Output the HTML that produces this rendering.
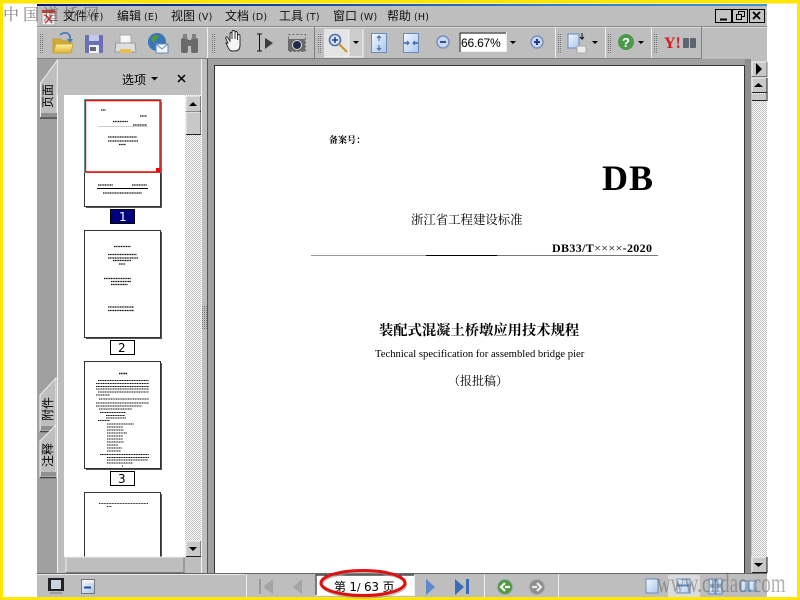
<!DOCTYPE html>
<html><head><meta charset="utf-8">
<style>
html,body{margin:0;padding:0;width:800px;height:600px;overflow:hidden;background:#fff}
.t{position:absolute;white-space:nowrap;line-height:1;color:#000}
.m{font-family:"WenQuanYi Zen Hei","Noto Sans CJK SC",sans-serif;font-size:12px;top:10px;color:#111}
.m small{font:9.500px "DejaVu Sans",sans-serif;margin-left:3px;letter-spacing:.2px}
.s{font-family:"Liberation Serif","Noto Serif CJK SC",serif}
svg{position:absolute;left:0;top:0}
.v{font-family:"WenQuanYi Zen Hei","Noto Sans CJK SC",sans-serif;font-size:12px;width:24px;height:12px;transform:rotate(-90deg);transform-origin:50% 50%}
</style></head><body>
<svg width="800" height="600" viewBox="0 0 800 600">
<defs>
<pattern id="d" width="2" height="2" patternUnits="userSpaceOnUse"><rect width="2" height="2" fill="#fff"/><rect width="1" height="1" fill="#bebebe"/><rect x="1" y="1" width="1" height="1" fill="#bebebe"/></pattern>
<pattern id="g" width="2" height="2" patternUnits="userSpaceOnUse"><rect width="1" height="1" fill="#777"/></pattern>
<linearGradient id="fo" x1="0" y1="0" x2="0" y2="1"><stop offset="0" stop-color="#fff3a8"/><stop offset="1" stop-color="#e0b030"/></linearGradient>
<linearGradient id="bl" x1="0" y1="0" x2="1" y2="1"><stop offset="0" stop-color="#f4f8fe"/><stop offset="1" stop-color="#a8c6ea"/></linearGradient>
<linearGradient id="tb" x1="0" y1="0" x2="1" y2="0"><stop offset="0" stop-color="#001a80"/><stop offset=".25" stop-color="#0a3c9a"/><stop offset=".7" stop-color="#2f7cd0"/><stop offset="1" stop-color="#3d92e0"/></linearGradient>
</defs>
<!-- frame -->
<rect x="37" y="4" width="730" height="593" fill="#bebebe"/>
<rect x="37" y="4" width="730" height="2" fill="url(#tb)"/>
<rect width="800" height="3.500" fill="#ffe600"/>
<rect width="3" height="600" fill="#ffe600"/>
<rect x="797" width="3" height="600" fill="#ffe600"/>
<rect y="597" width="800" height="3" fill="#ffe600"/>
<!-- toolbar lines -->
<rect x="37" y="26" width="730" height="1" fill="#8a8a8a"/>
<rect x="37" y="27" width="730" height="1" fill="#dcdcdc"/>
<rect x="37" y="58" width="665" height="1" fill="#808080"/>
<g fill="#eee"><rect x="207" y="27" width="1" height="31"/><rect x="555" y="27" width="1" height="31"/><rect x="605" y="27" width="1" height="31"/><rect x="651" y="27" width="1" height="31"/></g>
<g fill="#808080"><rect x="314" y="27" width="1" height="31"/><rect x="701" y="27" width="1" height="31"/></g>
<g fill="url(#g)"><rect x="40" y="33" width="4" height="20"/><rect x="212" y="33" width="4" height="20"/><rect x="318" y="33" width="4" height="20"/><rect x="558" y="33" width="4" height="20"/><rect x="608" y="33" width="4" height="20"/><rect x="654" y="33" width="4" height="20"/></g>
<!-- window buttons -->
<g fill="#c4c4c4" stroke="#000"><rect x="715.500" y="9.500" width="16" height="13"/><rect x="732.500" y="9.500" width="15" height="13"/><rect x="749.500" y="9.500" width="15" height="13"/></g>
<g fill="none" stroke="#000"><path d="M720 19.500h7" stroke-width="2"/><rect x="736.500" y="14.500" width="5" height="5"/><path d="M738.500 14v-2.500h6v5h-3" /><path d="M753 12l7 7M760 12l-7 7" stroke-width="1.800"/></g>
<!-- pdf icon -->
<path d="M42 10h13v15H42z" fill="#f4ecec" stroke="#aaa"/><path d="M42 10h13v3H42z" fill="#c84030"/><path d="M44 15c4 1 5 4 8 8M52 15c-2 3-4 6-7 8" stroke="#d83030" stroke-width="1.500" fill="none"/>
<!-- toolbar icons -->
<path d="M53 39h7l2 2h9v12H53z" fill="#d8a930" stroke="#c09a38"/><path d="M53 53l3-9h17l-2 9z" fill="url(#fo)" stroke="#c8a438"/><path d="M60 35c3-3 8-3 10 1v3" stroke="#4a7cb8" stroke-width="1.800" fill="none"/><path d="M67 39h6l-3 4z" fill="#4a7cb8"/>
<rect x="85" y="35" width="18" height="18" rx="1" fill="#6a70b4"/><rect x="89" y="35" width="10" height="6" fill="#c4c8e8"/><rect x="89" y="45" width="10" height="8" fill="#eef0f6"/><rect x="90" y="47" width="6" height="4" fill="#667"/>
<rect x="120" y="35" width="11" height="8" fill="#f4f6f8" stroke="#aaa"/><path d="M116 43h19l1 9h-21z" fill="#dcdee2" stroke="#999"/><rect x="120" y="49" width="11" height="4" fill="#e8c050"/>
<circle cx="157" cy="42" r="9" fill="#3a76b8"/><path d="M151 38c3-3 7-4 8-2-1 3-4 3-4 6-2 1-4-1-4-4z" fill="#4f9a40"/><rect x="156" y="44" width="12" height="9" fill="#f0f6fd" stroke="#6a8ab8"/><path d="M156 44l6 5 6-5" fill="none" stroke="#6a8ab8"/>
<g fill="#6a6a6a"><rect x="181" y="38" width="7" height="15" rx="2"/><rect x="191" y="38" width="7" height="15" rx="2"/><rect x="183" y="34" width="4" height="5" fill="#808080"/><rect x="192" y="34" width="4" height="5" fill="#808080"/><rect x="187" y="40" width="5" height="6"/></g>
<path d="M228 43l-2-4c-1-2 1-3 2-1l2 3v-7c0-2 2-2 2 0v5-7c0-2 3-2 3 0v7-6c0-2 2-2 2.500 0v7-4c0-2 2.500-2 2.500 0v9c0 4-2 6-5 6h-3c-3 0-4-4-6-8z" fill="#f6f6f6" stroke="#222" stroke-width=".9"/>
<path d="M257 34h5M259.500 34v17M257 51h5" stroke="#111" fill="none"/><path d="M265 38l8 5-8 6z" fill="#3c3c3c"/>
<rect x="288.500" y="34.500" width="17" height="17" fill="none" stroke="#666" stroke-dasharray="2 2"/><rect x="288" y="39" width="17" height="12" fill="#6a6a6a"/><circle cx="297" cy="45" r="4.500" fill="#1c2c4a" stroke="#ddd"/>
<rect x="324" y="29" width="25" height="28" fill="#e4e4e4"/><rect x="350" y="29" width="13" height="28" fill="#ccc"/><path d="M349 29v28M324 57h39V29" stroke="#f8f8f8" fill="none"/>
<circle cx="335" cy="40" r="5.500" fill="#dfe8f8" stroke="#4c6cb0" stroke-width="1.600"/><path d="M335 37v6M332 40h6" stroke="#1c3c90" stroke-width="1.500"/><path d="M339 44l8 8" stroke="#c49a30" stroke-width="2.200"/>
<path d="M353 41h6l-3 3zM510 41h6l-3 3zM592 41h6l-3 3zM638 41h6l-3 3z" fill="#000"/>
<rect x="371.500" y="33.500" width="15" height="19" fill="url(#bl)" stroke="#6a8ab8"/><path d="M379 36v5M379 45v5" stroke="#3a62a8"/><path d="M377 38l2-2 2 2M377 48l2 2 2-2" fill="none" stroke="#3a62a8"/>
<rect x="403.500" y="33.500" width="15" height="19" fill="url(#bl)" stroke="#6a8ab8"/><path d="M404 43h4M414 43h4" stroke="#3a62a8" stroke-width="1.400"/><path d="M407 41l2 2-2 2M415 41l-2 2 2 2" fill="none" stroke="#3a62a8"/>
<circle cx="443" cy="42" r="6" fill="#c8d8f0" stroke="#7a92bc" stroke-width="1.500"/><rect x="440" y="41" width="6" height="2" fill="#33528c"/>
<circle cx="537" cy="42" r="6" fill="#c8d8f0" stroke="#7a92bc" stroke-width="1.500"/><path d="M537 39v6M534 42h6" stroke="#1c3c90" stroke-width="2"/>
<rect x="459.500" y="32.500" width="47" height="19" fill="#fff" stroke="#eee"/><path d="M460 52v-19h46" stroke="#000" fill="none"/>
<path d="M568 34h11v14h-11z" fill="url(#bl)" stroke="#6a8ab8"/><path d="M577 46h9v7l-3 0h-6z" fill="#eee" stroke="#aaa"/><path d="M582 33v6l-2-2M582 39l2-2" stroke="#111" fill="none"/>
<circle cx="626" cy="42" r="8" fill="#4a9a4a"/><text x="622" y="47" font-family="Liberation Sans" font-weight="bold" font-size="13" fill="#fff">?</text>
<text x="664" y="48" font-family="Liberation Serif" font-weight="bold" font-size="16" fill="#d81818">Y!</text>
<g fill="#5c6470"><rect x="683" y="38" width="6" height="10" rx="1"/><rect x="690" y="38" width="6" height="10" rx="1"/></g>
<!-- left panel -->
<rect x="37" y="59" width="20" height="515" fill="#a0a0a0"/>
<rect x="57" y="59" width="144" height="36" fill="#bebebe"/>
<path d="M57.500 60L40.500 83V118H57V95Z" fill="#bebebe" stroke="#f0f0f0"/>
<path d="M40 118h17" stroke="#444" stroke-width="1.500"/><rect x="41" y="113" width="16" height="4" fill="#909090"/>
<rect x="57" y="95" width="1" height="479" fill="#f4f4f4"/>
<rect x="58" y="95" width="6" height="479" fill="#bebebe"/>
<rect x="64" y="95" width="121" height="463" fill="#fff"/>
<rect x="185" y="95" width="16" height="463" fill="url(#d)"/>
<rect x="186" y="96" width="14" height="15" fill="#c8c8c8"/><path d="M186 111V96h14" stroke="#f4f4f4" fill="none"/><path d="M186 111.500h15V96" stroke="#222" fill="none"/><path d="M189 106h8l-4-4z" fill="#000"/>
<rect x="186" y="112" width="14" height="22" fill="#c8c8c8"/><path d="M186 134V112h14" stroke="#f4f4f4" fill="none"/><path d="M186 134.500h15V112" stroke="#222" fill="none"/>
<rect x="186" y="541" width="14" height="15" fill="#c8c8c8"/><path d="M186 556V541h14" stroke="#f4f4f4" fill="none"/><path d="M186 556.500h15V541" stroke="#222" fill="none"/><path d="M189 547h8l-4 4z" fill="#000"/>
<rect x="201" y="59" width="1" height="515" fill="#f4f4f4"/><rect x="202" y="59" width="5" height="515" fill="#bebebe"/><rect x="207" y="59" width="1" height="515" fill="#555"/>
<rect x="202" y="306" width="5" height="24" fill="url(#g)"/>
<!-- side tabs -->
<path d="M56 378L40 395V431H56Z" fill="#bebebe" stroke="#eee"/><path d="M40 431.500h16" stroke="#444" stroke-width="1.500"/><rect x="41" y="426" width="15" height="4" fill="#909090"/>
<path d="M56 425L40 441V477H56Z" fill="#bebebe" stroke="#eee"/><path d="M40 477.500h16" stroke="#444" stroke-width="1.500"/><rect x="41" y="472" width="15" height="4" fill="#909090"/>
<!-- close x -->
<path d="M178 75l7 7M185 75l-7 7" stroke="#000" stroke-width="1.500"/><path d="M151 77h7l-3.500 3.500z" fill="#000"/>
<!-- thumbs -->
<g>
<rect x="86" y="102" width="76" height="106" fill="#555"/><rect x="84.500" y="100.500" width="76" height="106" fill="#fff" stroke="#333"/>
<rect x="84.500" y="99.500" width="76.500" height="73" fill="none" stroke="#3bb5b5"/><path d="M85.500 172V100.500H160V172H85.500" fill="none" stroke="#f00" stroke-width="1.400"/><rect x="156" y="168" width="4" height="4" fill="#f00"/>
<path d="M98 126.500h50" stroke="#ccc"/><path d="M97 188.500h51" stroke="#000"/>
<g stroke="#111" fill="none" stroke-dasharray="1.200 .5" stroke-width="1.300"><path d="M101 110h5M140 116h7M113 121.500h15M133 125h14"/><path d="M108 137h29M108 141h30M119 144.500h7M98 185h15M132 185h15M103 193h39"/></g>
</g>
<rect x="110.500" y="209.500" width="24" height="14" fill="#000080" stroke="#000"/>
<g>
<rect x="86" y="232" width="76" height="107" fill="#555"/><rect x="84.500" y="230.500" width="76" height="107" fill="#fff" stroke="#333"/>
<g stroke="#111" fill="none" stroke-dasharray="1.200 .5" stroke-width="1.200"><path d="M114 246.500h17M108 254.500h29M108 258h30M113 260.500h18M119 264h6M104 278.500h27M111 281.500h20M111 284.500h17M108 307h26M108 310.500h26"/></g>
</g>
<rect x="110.500" y="340.500" width="24" height="14" fill="#fff" stroke="#000"/>
<g>
<rect x="86" y="363" width="76" height="107" fill="#555"/><rect x="84.500" y="361.500" width="76" height="107" fill="#fff" stroke="#333"/>
<g stroke="#111" fill="none" stroke-dasharray="1.200 .5" stroke-width="1.100"><path d="M119 373.500h8" stroke-width="1.500"/><path d="M98 380.500h51M96 383.500h53M96 386.500h53M96 389h53M98 392h51M96 395h14M99 399h50M96 403h53M96 406h46M99 409h33M100 412.500h26M106 415.500h19M106 418h20M98 420.500h12M107 424h27M107 427h16M107 430h17M107 433h20M107 436h16M107 439h16M107 442h17M107 445h11M107 448h15M107 451h14M100 454.500h49M107 457.500h42M107 460h41M107 463h26M122 466h1"/></g>
</g>
<rect x="110.500" y="471.500" width="24" height="14" fill="#fff" stroke="#000"/>
<rect x="86" y="494" width="76" height="64" fill="#555"/><rect x="84.500" y="492.500" width="76" height="70" fill="#fff" stroke="#333"/>
<path d="M99 503.500h49M107 506.500h5" stroke="#222" stroke-dasharray="1 .6"/>
<rect x="64" y="557" width="137" height="16" fill="#bebebe"/><path d="M66 572.500h118v-15" stroke="#777" fill="none"/><path d="M66 572v-15h118" stroke="#eee" fill="none"/>
<!-- main -->
<rect x="208" y="59" width="6" height="515" fill="#a0a0a0"/>
<rect x="214" y="59" width="537" height="6" fill="#a0a0a0"/>
<rect x="745" y="59" width="6" height="515" fill="#8e8e8e"/>
<rect x="215" y="66" width="530" height="508" fill="#fff"/>
<path d="M214.500 574V65.500H744.500V574" fill="none" stroke="#333"/>
<path d="M311 255.500H426" stroke="#999"/><path d="M426 255.500H497" stroke="#000"/><path d="M497 255.500H658" stroke="#777"/>
<!-- right scrollbar -->
<rect x="751" y="59" width="16" height="515" fill="#bebebe"/>
<rect x="752" y="93" width="15" height="464" fill="url(#d)"/>
<rect x="752" y="62" width="14" height="14" fill="#c8c8c8"/><path d="M752 76V62h14" stroke="#f4f4f4" fill="none"/><path d="M752 76.500h15V62" stroke="#777" fill="none"/><path d="M756 63l6 6-6 6z" fill="#000"/>
<rect x="752" y="78" width="14" height="14" fill="#c8c8c8"/><path d="M752 92V78h14" stroke="#f4f4f4" fill="none"/><path d="M752 92.500h15V78" stroke="#222" fill="none"/><path d="M754 87h9l-4.500-4z" fill="#000"/>
<rect x="752" y="94" width="14" height="6" fill="#c8c8c8"/><path d="M752 100.500h15V93" stroke="#222" fill="none"/>
<rect x="752" y="557" width="14" height="15" fill="#c8c8c8"/><path d="M752 572V557h14" stroke="#f4f4f4" fill="none"/><path d="M752 572.500h15V557" stroke="#222" fill="none"/><path d="M754 563h9l-4.500 4z" fill="#000"/>
<!-- status -->
<rect x="37" y="573" width="730" height="1" fill="#666"/>
<rect x="37" y="574" width="730" height="23" fill="#bebebe"/><rect x="37" y="574" width="208" height="1" fill="#e8e8e8"/>
<rect x="246" y="574" width="1" height="23" fill="#eee"/><rect x="484" y="574" width="1" height="23" fill="#eee"/><rect x="558" y="574" width="1" height="23" fill="#eee"/>
<rect x="48" y="578" width="16" height="13" fill="#222"/><rect x="51" y="580" width="10" height="9" fill="#c8d4e0"/><path d="M50 593h12" stroke="#777"/>
<rect x="81.500" y="579.500" width="13" height="14" fill="url(#bl)" stroke="#777"/><rect x="82" y="580" width="12" height="3" fill="#eee"/><rect x="84" y="586.500" width="7" height="2" fill="#2a4a90"/>
<rect x="259" y="579" width="2" height="15" fill="#999"/><path d="M263 587l10-8v15z" fill="#a4a4a4"/><path d="M293 587l9-8v15z" fill="#a4a4a4"/>
<rect x="315.500" y="575.500" width="99" height="20" fill="#fff" stroke="#eee"/><path d="M316 595v-20h98" stroke="#000" fill="none"/>
<path d="M426 579l9 8-9 8z" fill="#5a8acc"/><path d="M455 579l9 8-9 8z" fill="#3a6cb8"/><rect x="466" y="579" width="3" height="15" fill="#3a6cb8"/>
<circle cx="505" cy="587" r="7.500" fill="#4f9a3a" stroke="#9ab"/><path d="M510 587h-5M505 583l-4 4 4 4" stroke="#fff" stroke-width="2.200" fill="none"/>
<circle cx="537" cy="587" r="7.500" fill="#8e8e8e" stroke="#aaa"/><path d="M532 587h5M537 583l4 4-4 4" stroke="#eee" stroke-width="2.200" fill="none"/>
<rect x="646" y="579" width="12" height="14" fill="url(#bl)" stroke="#6a8ab8"/>
<rect x="668" y="575" width="32" height="22" fill="#dcdcdc"/><rect x="677" y="579" width="13" height="6" fill="url(#bl)" stroke="#6a8ab8"/><rect x="677" y="586" width="13" height="7" fill="url(#bl)" stroke="#6a8ab8"/>
<rect x="709" y="579" width="6" height="6" fill="url(#bl)" stroke="#6a8ab8"/><rect x="716" y="579" width="6" height="6" fill="url(#bl)" stroke="#6a8ab8"/><rect x="709" y="587" width="6" height="7" fill="url(#bl)" stroke="#6a8ab8"/><rect x="716" y="587" width="6" height="7" fill="url(#bl)" stroke="#6a8ab8"/>
<rect x="741" y="581" width="7" height="10" fill="url(#bl)" stroke="#6a8ab8"/><rect x="749" y="581" width="7" height="10" fill="url(#bl)" stroke="#6a8ab8"/>
</svg>

<div class="t m" style="left:63px">文件<small>(F)</small></div>
<div class="t m" style="left:117px">编辑<small>(E)</small></div>
<div class="t m" style="left:171px">视图<small>(V)</small></div>
<div class="t m" style="left:225px">文档<small>(D)</small></div>
<div class="t m" style="left:279px">工具<small>(T)</small></div>
<div class="t m" style="left:333px">窗口<small>(W)</small></div>
<div class="t m" style="left:387px">帮助<small>(H)</small></div>
<div class="t" style="left:461px;top:36px;font:12px 'Liberation Sans',sans-serif;letter-spacing:-.2px">66.67%</div>
<div class="t" style="left:122px;top:71px;font:12px 'WenQuanYi Zen Hei','Noto Sans CJK SC',sans-serif">选项</div>
<div class="t v" style="left:36px;top:90px">页面</div>
<div class="t v" style="left:36px;top:403px">附件</div>
<div class="t v" style="left:36px;top:449px">注释</div>
<div class="t" style="left:119px;top:210px;font:12px 'DejaVu Sans',sans-serif;color:#fff">1</div>
<div class="t" style="left:118px;top:341px;font:12px 'DejaVu Sans',sans-serif">2</div>
<div class="t" style="left:118px;top:472px;font:12px 'DejaVu Sans',sans-serif">3</div>

<div class="t s" style="left:329px;top:136px;font-size:9px;font-weight:bold">备案号：</div>
<div class="t s" style="left:602px;top:160px;font-size:36px;font-weight:bold;letter-spacing:1px">DB</div>
<div class="t s" style="left:411px;top:214px;font-size:12.400px">浙江省工程建设标准</div>
<div class="t s" style="left:552px;top:242px;font-size:12px;font-weight:bold;letter-spacing:.35px">DB33/T<span style="font-weight:normal">××××</span>-2020</div>
<div class="t s" style="left:379px;top:324px;font-size:14.300px;font-weight:bold">装配式混凝土桥墩应用技术规程</div>
<div class="t s" style="left:375px;top:350px;font-size:10.650px">Technical specification for assembled bridge pier</div>
<div class="t s" style="left:448px;top:375px;font-size:12px">（报批稿）</div>

<div class="t" style="left:334px;top:578px;font:12px 'DejaVu Sans','WenQuanYi Zen Hei','Noto Sans CJK SC',sans-serif;letter-spacing:-.2px">第 1<span style="font-size:11px">/</span> 63 页</div>
<svg width="800" height="600" viewBox="0 0 800 600" style="pointer-events:none">
<ellipse cx="364" cy="585" rx="42" ry="12.500" fill="none" stroke="#999" stroke-width="2" opacity=".6"/>
<ellipse cx="363" cy="583" rx="42" ry="12.500" fill="none" stroke="#e01010" stroke-width="3"/>
</svg>
<div class="t" style="left:3px;top:2px;font:16px 'Noto Serif CJK SC',serif;color:#555;opacity:.75;letter-spacing:4px">中国道桥网</div>
<div class="t" style="left:657px;top:568px;font:27px 'Liberation Serif',serif;color:#555;opacity:.45;letter-spacing:.2px;transform:scaleX(.7);transform-origin:0 0">www.cndao.com</div>
</body></html>
